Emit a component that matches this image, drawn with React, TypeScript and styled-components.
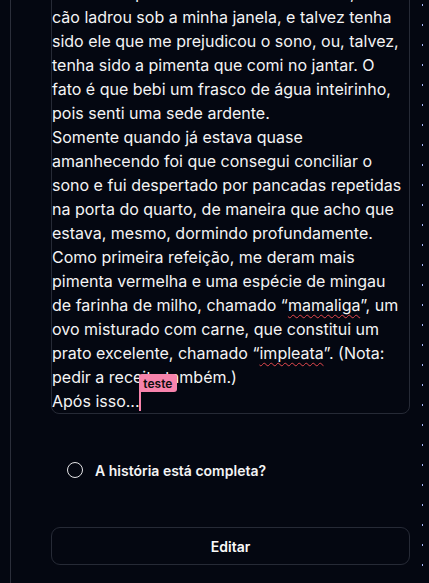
import React from "react";
import styled, { createGlobalStyle } from "styled-components";

const GlobalStyle = createGlobalStyle`
  html, body {
    margin: 0;
    padding: 0;
    background: #040711;
    font-family: Inter, "Noto Sans", sans-serif;
    color: #f4f4f5;
    overflow: hidden;
  }
  * { box-sizing: border-box; }
`;

const Page = styled.div`
  display: flex;
  height: 100vh;
  padding-left: 10px;
  overflow: hidden;
`;

const Main = styled.main`
  display: flex;
  flex-direction: column;
  justify-content: flex-end;
  width: 412px;
  height: 100%;
  border-left: 1px solid #2b2e3a;
  padding: 0 12px 18px 40px;
  overflow: hidden;
`;

const DotRail = styled.div`
  width: 1px;
  height: 100%;
  background: repeating-linear-gradient(
    to bottom,
    transparent 0px,
    transparent 4px,
    #a5b4fc 4px,
    #a5b4fc 6px,
    transparent 6px,
    transparent 20px
  );
`;

const Editor = styled.div`
  flex-shrink: 0;
  border: 1px solid #262a36;
  border-radius: 8px;
  padding: 0 5px 0 0;
  font-size: 16px;
  line-height: 24px;
  color: #f4f4f5;
`;

const Paragraph = styled.p`
  margin: 0;
`;

const Misspelled = styled.span`
  text-decoration: underline wavy #e5484d;
  text-decoration-thickness: 1px;
  text-underline-offset: 3px;
  text-decoration-skip-ink: none;
`;

const Caret = styled.span<{ $color: string }>`
  position: relative;
  display: inline-block;
  width: 0;
  height: 19px;
  vertical-align: -4px;
  border-left: 1px solid ${(p) => p.$color};
  border-right: 1px solid ${(p) => p.$color};
  margin-left: -1px;
  margin-right: -1px;
  pointer-events: none;
`;

const CaretLabel = styled.span<{ $color: string }>`
  position: absolute;
  top: -18px;
  left: -1px;
  font-size: 12px;
  font-weight: 600;
  line-height: normal;
  padding: 0.1rem 0.3rem;
  border-radius: 3px 3px 3px 0;
  background: ${(p) => p.$color};
  color: #0d0d0d;
  white-space: nowrap;
  user-select: none;
`;

const CheckRow = styled.label`
  flex-shrink: 0;
  display: flex;
  align-items: center;
  gap: 12px;
  height: 24px;
  margin: 44px 0 45px;
  padding-left: 16px;
  font-size: 14px;
  font-weight: 600;
  color: #f4f4f5;
  cursor: pointer;
`;

const RadioCircle = styled.span`
  width: 16px;
  height: 16px;
  border-radius: 50%;
  border: 1.5px solid #e4e4e7;
  flex-shrink: 0;
`;

const Button = styled.button`
  flex-shrink: 0;
  height: 38px;
  width: 100%;
  border: 1px solid #262a36;
  border-radius: 9px;
  background: transparent;
  color: #fafafa;
  font-family: Inter, "Noto Sans", sans-serif;
  font-size: 14px;
  font-weight: 600;
  cursor: pointer;
`;

const PINK = "#f783ac";

export default function App() {
  return (
    <>
      <GlobalStyle />
      <Page>
        <Main>
          <Editor>
            <Paragraph>
              sonhos esquisitos. Durante toda a noite, um cão ladrou sob a minha janela, e talvez tenha sido
              ele que me prejudicou o sono, ou, talvez, tenha sido a pimenta que comi no jantar. O fato é que
              bebi um frasco de água inteirinho, pois senti uma sede ardente.
            </Paragraph>
            <Paragraph>
              Somente quando já estava quase amanhecendo foi que consegui conciliar o sono e fui despertado
              por pancadas repetidas na porta do quarto, de maneira que acho que estava, mesmo, dormindo
              profundamente.
            </Paragraph>
            <Paragraph>
              Como primeira refeição, me deram mais pimenta vermelha e uma espécie de mingau de farinha de
              milho, chamado “<Misspelled>mamaliga</Misspelled>”, um ovo misturado com carne, que constitui um
              prato excelente, chamado “<Misspelled>impleata</Misspelled>”. (Nota: pedir a receita também.)
            </Paragraph>
            <Paragraph>
              Após isso...
              <Caret $color={PINK}>
                <CaretLabel $color={PINK}>teste</CaretLabel>
              </Caret>
            </Paragraph>
          </Editor>
          <CheckRow>
            <RadioCircle />
            A história está completa?
          </CheckRow>
          <Button>Editar</Button>
        </Main>
        <DotRail />
      </Page>
    </>
  );
}
